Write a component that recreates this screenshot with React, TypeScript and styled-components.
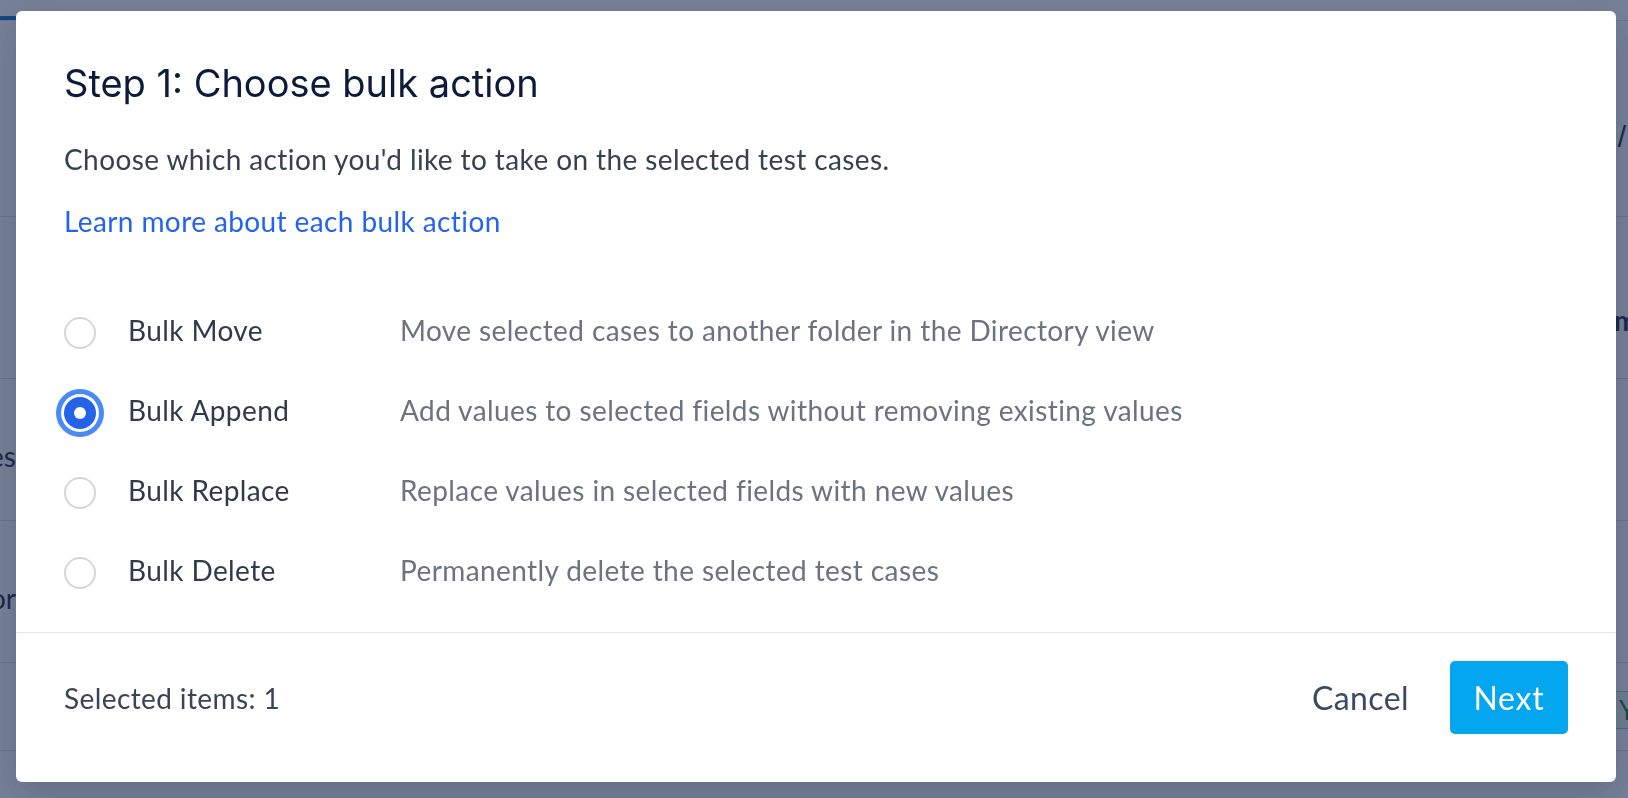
import React, { useState } from "react";
import styled, { createGlobalStyle } from "styled-components";

const GlobalStyle = createGlobalStyle`
  html, body { margin: 0; padding: 0; }
  body {
    width: 1628px;
    height: 798px;
    overflow: hidden;
    background: #ffffff;
    font-family: "Lato", "Open Sans", sans-serif;
    -webkit-font-smoothing: antialiased;
  }
  * { box-sizing: border-box; }
`;

/* ---------- background page (behind the overlay) ---------- */

const Page = styled.div`
  width: 1628px;
  height: 798px;
  display: flex;
  flex-direction: column;
  background: #ffffff;
`;

const PageHeader = styled.div`
  height: 217px;
  display: flex;
  flex-direction: column;
  border-bottom: 1px solid #d5dae2;
`;

const TabStrip = styled.div`
  height: 21px;
  display: flex;
  align-items: flex-end;
  border-bottom: 1px solid #e5e7eb;
`;

const ActiveTab = styled.div`
  width: 140px;
  height: 4px;
  background: #0b6fd1;
`;

const HeaderBody = styled.div`
  flex: 1;
  display: flex;
  justify-content: flex-end;
  align-items: center;
  padding: 36px 2px 0 0;
  font-family: "Liberation Sans", sans-serif;
  font-size: 30px;
  color: #1f2a44;
`;

const TableRow = styled.div<{ $h: number }>`
  height: ${(p) => p.$h}px;
  display: flex;
  align-items: center;
  justify-content: space-between;
  border-bottom: 1px solid #d5dae2;
  font-family: "Lato", sans-serif;
  font-size: 28px;
  color: #1f2a44;
`;

const LeftCell = styled.div`
  width: 16px;
  padding-top: 12px;
  overflow: hidden;
  display: flex;
  justify-content: flex-end;
  white-space: nowrap;
`;

const RightCell = styled.div<{ $offset?: number }>`
  width: 14px;
  padding-top: ${(p) => p.$offset ?? 6}px;
  overflow: hidden;
  display: flex;
  justify-content: flex-start;
  white-space: nowrap;
  font-weight: 700;
`;

const Badge = styled.span`
  padding: 2px 4px;
  border: 1px solid #8fd1a8;
  background: #e8f7ee;
  color: #137a3c;
  font-size: 26px;
  font-weight: 400;
`;

/* ---------- overlay + modal ---------- */

const Overlay = styled.div`
  position: fixed;
  inset: 0;
  background: rgba(26, 44, 80, 0.6);
  padding: 11px 12px 16px 16px;
  display: flex;
  align-items: flex-start;
`;

const Modal = styled.div`
  width: 1600px;
  height: 771px;
  background: #ffffff;
  border-radius: 6px;
  display: flex;
  flex-direction: column;
  box-shadow: 0 12px 32px rgba(15, 23, 42, 0.18);
`;

const Content = styled.div`
  flex: 1;
  display: flex;
  flex-direction: column;
  padding: 49px 48px 0;
`;

const Title = styled.h2`
  margin: 0;
  font-family: "Inter", "Liberation Sans", sans-serif;
  font-size: 38px;
  line-height: 46px;
  font-weight: 400;
  color: #0c1b3a;
  letter-spacing: 0;
`;

const BodyText = styled.span`
  font-size: 28px;
  line-height: 36px;
  letter-spacing: 0.4px;
`;

const Intro = styled(BodyText).attrs({ as: "p" })`
  margin: 35px 0 0;
  color: #374151;
`;

const LearnLink = styled(BodyText).attrs({ as: "a" })`
  margin-top: 26px;
  align-self: flex-start;
  color: #2563eb;
  text-decoration: none;
  cursor: pointer;
`;

const OptionList = styled.div`
  margin-top: 54px;
  display: flex;
  flex-direction: column;
`;

const OptionRow = styled.label`
  height: 80px;
  display: flex;
  align-items: center;
  cursor: pointer;
`;

const HiddenInput = styled.input`
  position: absolute;
  opacity: 0;
  width: 0;
  height: 0;
  margin: 0;
`;

const RadioDot = styled.span<{ $checked: boolean }>`
  flex: none;
  width: 32px;
  height: 32px;
  border-radius: 50%;
  border: 2px solid ${(p) => (p.$checked ? "#2563eb" : "#d3d6dc")};
  background: ${(p) => (p.$checked ? "#2563eb" : "#ffffff")};
  box-shadow: ${(p) =>
    p.$checked ? "0 0 0 3px #ffffff, 0 0 0 8px #4a8af4" : "none"};
  display: flex;
  align-items: center;
  justify-content: center;
  &::after {
    content: "";
    width: 12px;
    height: 12px;
    border-radius: 50%;
    background: #ffffff;
    display: ${(p) => (p.$checked ? "block" : "none")};
  }
`;

const OptionLabel = styled(BodyText)`
  width: 304px;
  padding: 0 0 6px 32px;
  color: #2f3a4d;
`;

const OptionDesc = styled(BodyText)`
  padding-bottom: 6px;
  color: #6b7280;
`;

const Divider = styled.div`
  height: 1px;
  background: #e3e5e9;
`;

const Footer = styled.div`
  height: 149px;
  display: flex;
  align-items: flex-start;
  justify-content: space-between;
  padding: 28px 48px 0;
`;

const FooterInfo = styled(BodyText)`
  height: 73px;
  display: flex;
  align-items: center;
  color: #3a4456;
`;

const Actions = styled.div`
  display: flex;
  align-items: center;
  gap: 21px;
`;

const CancelButton = styled.button`
  height: 73px;
  padding: 0 20px;
  border: none;
  background: transparent;
  font-family: "Lato", sans-serif;
  font-size: 32px;
  letter-spacing: 0.4px;
  color: #3d4862;
  cursor: pointer;
`;

const NextButton = styled.button`
  width: 118px;
  height: 73px;
  border: none;
  border-radius: 5px;
  background: #04a6ef;
  color: #ffffff;
  font-family: "Lato", sans-serif;
  font-size: 32px;
  letter-spacing: 0.8px;
  cursor: pointer;
`;

const options = [
  { id: "move", label: "Bulk Move", desc: "Move selected cases to another folder in the Directory view" },
  { id: "append", label: "Bulk Append", desc: "Add values to selected fields without removing existing values" },
  { id: "replace", label: "Bulk Replace", desc: "Replace values in selected fields with new values" },
  { id: "delete", label: "Bulk Delete", desc: "Permanently delete the selected test cases" },
];

export default function App() {
  const [selected, setSelected] = useState("append");

  return (
    <>
      <GlobalStyle />
      <Page>
        <PageHeader>
          <TabStrip>
            <ActiveTab />
          </TabStrip>
          <HeaderBody>/</HeaderBody>
        </PageHeader>
        <TableRow $h={162}>
          <LeftCell />
          <RightCell $offset={44}>mode</RightCell>
        </TableRow>
        <TableRow $h={142}>
          <LeftCell>Test cases</LeftCell>
          <RightCell />
        </TableRow>
        <TableRow $h={142}>
          <LeftCell>Creator</LeftCell>
          <RightCell />
        </TableRow>
        <TableRow $h={88}>
          <LeftCell />
          <RightCell>
            <Badge>YES</Badge>
          </RightCell>
        </TableRow>
      </Page>

      <Overlay>
        <Modal role="dialog" aria-labelledby="bulk-title">
          <Content>
            <Title id="bulk-title">Step 1: Choose bulk action</Title>
            <Intro>Choose which action you'd like to take on the selected test cases.</Intro>
            <LearnLink>Learn more about each bulk action</LearnLink>
            <OptionList role="radiogroup">
              {options.map((o) => (
                <OptionRow key={o.id}>
                  <HiddenInput
                    type="radio"
                    name="bulk-action"
                    value={o.id}
                    checked={selected === o.id}
                    onChange={() => setSelected(o.id)}
                  />
                  <RadioDot $checked={selected === o.id} />
                  <OptionLabel>{o.label}</OptionLabel>
                  <OptionDesc>{o.desc}</OptionDesc>
                </OptionRow>
              ))}
            </OptionList>
          </Content>
          <Divider />
          <Footer>
            <FooterInfo>Selected items: 1</FooterInfo>
            <Actions>
              <CancelButton>Cancel</CancelButton>
              <NextButton>Next</NextButton>
            </Actions>
          </Footer>
        </Modal>
      </Overlay>
    </>
  );
}
